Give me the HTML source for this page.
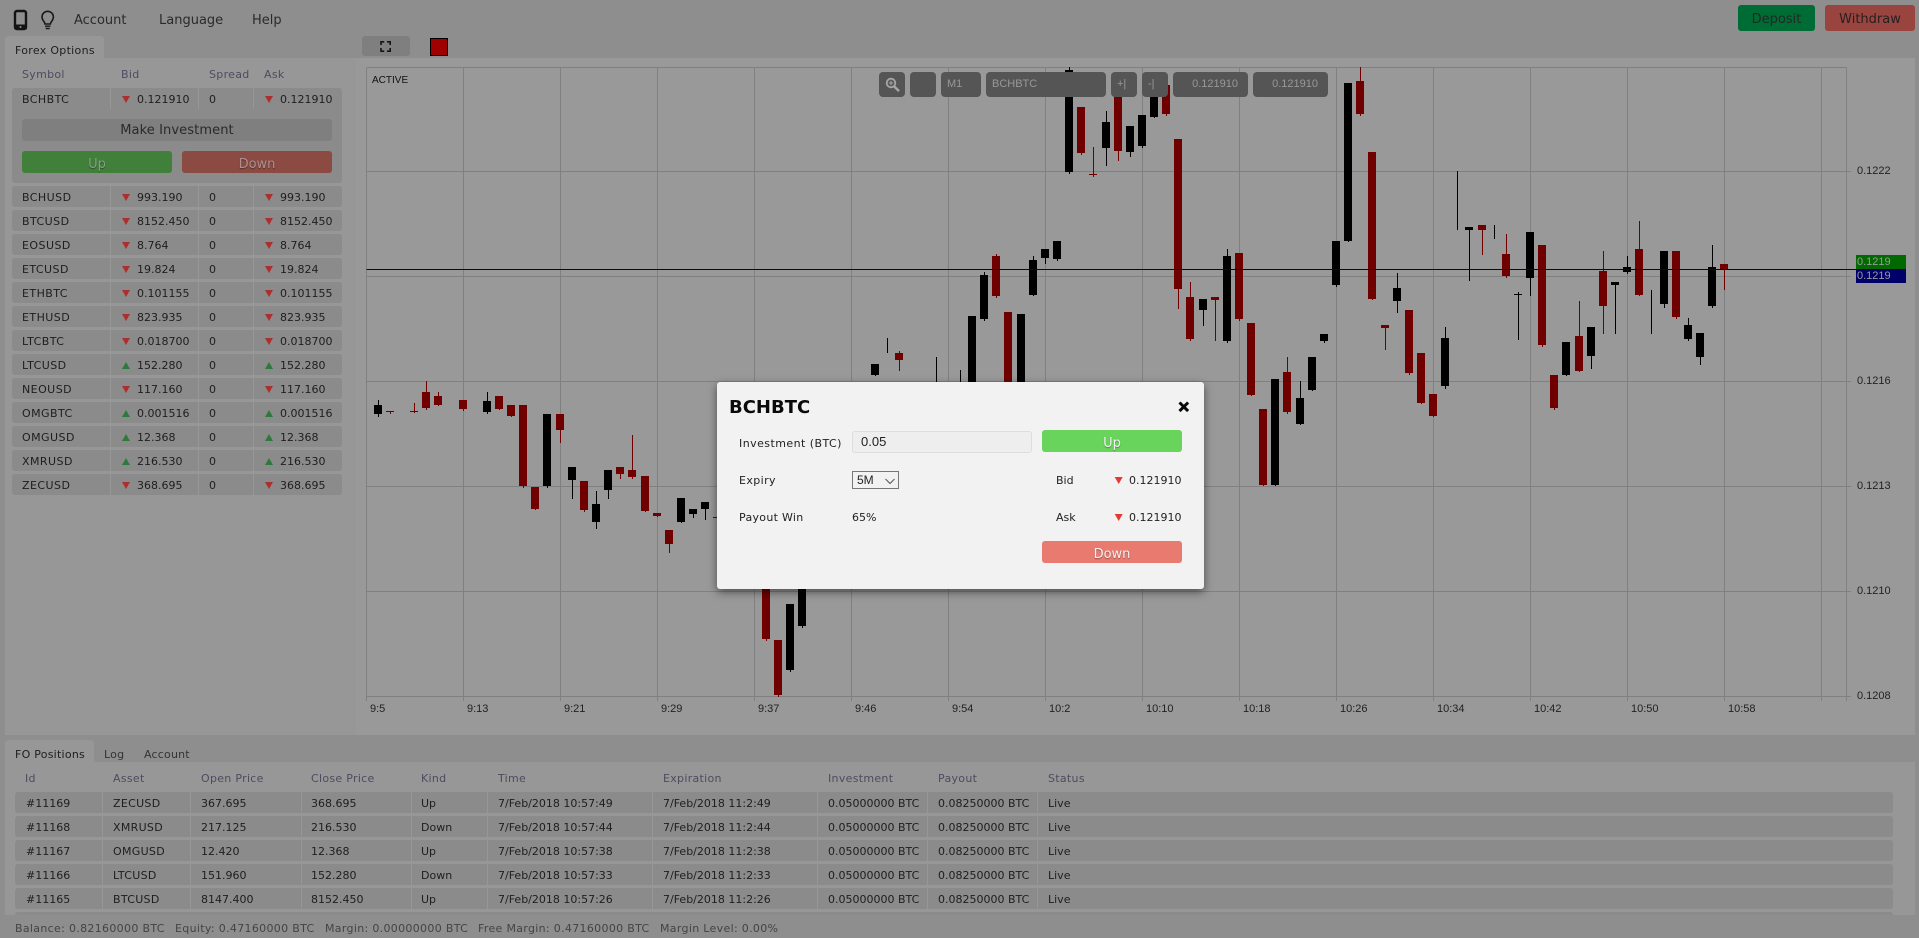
<!DOCTYPE html>
<html><head><meta charset="utf-8"><title>Forex Options</title>
<style>
html,body{margin:0;padding:0;width:1919px;height:938px;overflow:hidden;background:#8e8e8e}
body{position:relative;font-family:"DejaVu Sans","Liberation Sans",sans-serif;font-size:11px;color:#1e1e1e}
div,span,i{position:absolute;white-space:nowrap}
span{line-height:14px}
svg{position:absolute;left:0;top:0}
.m{font-size:13px;top:14px;color:#2a2a2a}
.tab{background:#979797;border-radius:3px 3px 0 0}
.h{color:#4c4c60;letter-spacing:.3px}
.r{left:12px;width:330px;height:21px;background:#8b8b8b;border-radius:3px}
.r b{position:absolute;top:0;bottom:0;width:1px;background:#979797}
.r span{top:5px}
.s1{left:10px;letter-spacing:.45px}.s2{left:125px}.s3{left:185px}.s4{left:268px}
.dn,.up{width:0;height:0;border-left:4px solid transparent;border-right:4px solid transparent;top:8px}
.dn{border-top:7px solid #ab2f2f}.up{border-bottom:7px solid #2f7a3a}
.t1{left:110px}.t2{left:253px}
.q{left:15px;width:1878px;height:21px;background:#8b8b8b;border-radius:3px}
.q b{position:absolute;top:0;bottom:0;width:1px;background:#979797}
.q span{top:5px}
.q span:nth-of-type(2){letter-spacing:.3px}
.btn{border-radius:3px;text-align:center;line-height:27px;font-size:13px}
.tb{top:72px;height:25px;background:#555;border-radius:4px;color:#989898;font:11px/25px "Liberation Sans",sans-serif}
.tb span{line-height:25px}
.cl,.pl{font:11px/14px "Liberation Sans",sans-serif;color:#222}
.cl{top:702px}
.pl{left:1857px}
.st{top:922px;color:#444;letter-spacing:.32px}
#modal span{color:#222}
</style></head><body>

<!-- top bar -->
<svg width="60" height="36" viewBox="0 0 60 36" style="z-index:1">
<rect x="15" y="11" width="11" height="18" rx="2" fill="none" stroke="#141414" stroke-width="2.4"/>
<rect x="14" y="24.5" width="13" height="5" rx="1.5" fill="#141414"/>
<circle cx="20.5" cy="27" r="1" fill="#8e8e8e"/>
<path d="M45 24c0-2.2-3-3.4-3-7a5.7 5.7 0 0 1 11.4 0c0 3.600-3 4.800-3 7z" fill="none" stroke="#1a1a1a" stroke-width="1.600"/>
<path d="M45 26.200h5.500M45.700 28.500h4" stroke="#1a1a1a" stroke-width="1.400" fill="none"/>
</svg>
<span class="m" style="left:74px">Account</span>
<span class="m" style="left:159px">Language</span>
<span class="m" style="left:252px">Help</span>
<div class="btn" style="left:1738px;top:5px;width:77px;height:26px;background:#006c35;color:#1e2a22;line-height:30px">Deposit</div>
<div class="btn" style="left:1825px;top:5px;width:90px;height:26px;background:#9a4440;color:#262020;line-height:30px">Withdraw</div>

<!-- left panel -->
<div class="tab" style="left:5px;top:36px;width:99px;height:22px"></div>
<span style="left:15px;top:44px;color:#1e1e1e;letter-spacing:.3px">Forex Options</span>
<div style="left:5px;top:58px;width:351px;height:677px;background:#979797"></div>
<div style="left:356px;top:58px;width:1559px;height:677px;background:#999"></div>

<span class="h" style="left:22px;top:68px">Symbol</span>
<span class="h" style="left:121px;top:68px">Bid</span>
<span class="h" style="left:209px;top:68px">Spread</span>
<span class="h" style="left:264px;top:68px">Ask</span>

<div class="r" style="top:88px;height:95px"><b style="left:98px;bottom:74px"></b><b style="left:186px;bottom:74px"></b><b style="left:241px;bottom:74px"></b>
<span class="s1">BCHBTC</span><i class="dn t1"></i><span class="s2">0.121910</span><span class="s3" style="left:197px">0</span><i class="dn t2"></i><span class="s4">0.121910</span></div>
<div class="btn" style="left:22px;top:119px;width:310px;height:22px;background:#7f7f7f;color:#2a2a2a;letter-spacing:.1px;line-height:24px">Make Investment</div>
<div class="btn" style="left:22px;top:151px;width:150px;height:22px;background:#40803a;color:#8a9c88;text-shadow:0 1px 1px rgba(0,0,0,.4)">Up</div>
<div class="btn" style="left:182px;top:151px;width:150px;height:22px;background:#8b4a42;color:#ab9290;text-shadow:0 1px 1px rgba(0,0,0,.4)">Down</div>

<div class="r" style="top:186px"><b style="left:98px"></b><b style="left:186px"></b><b style="left:241px"></b><span class="s1">BCHUSD</span><i class="dn t1"></i><span class="s2">993.190</span><span style="left:197px">0</span><i class="dn t2"></i><span class="s4">993.190</span></div>
<div class="r" style="top:210px"><b style="left:98px"></b><b style="left:186px"></b><b style="left:241px"></b><span class="s1">BTCUSD</span><i class="dn t1"></i><span class="s2">8152.450</span><span style="left:197px">0</span><i class="dn t2"></i><span class="s4">8152.450</span></div>
<div class="r" style="top:234px"><b style="left:98px"></b><b style="left:186px"></b><b style="left:241px"></b><span class="s1">EOSUSD</span><i class="dn t1"></i><span class="s2">8.764</span><span style="left:197px">0</span><i class="dn t2"></i><span class="s4">8.764</span></div>
<div class="r" style="top:258px"><b style="left:98px"></b><b style="left:186px"></b><b style="left:241px"></b><span class="s1">ETCUSD</span><i class="dn t1"></i><span class="s2">19.824</span><span style="left:197px">0</span><i class="dn t2"></i><span class="s4">19.824</span></div>
<div class="r" style="top:282px"><b style="left:98px"></b><b style="left:186px"></b><b style="left:241px"></b><span class="s1">ETHBTC</span><i class="dn t1"></i><span class="s2">0.101155</span><span style="left:197px">0</span><i class="dn t2"></i><span class="s4">0.101155</span></div>
<div class="r" style="top:306px"><b style="left:98px"></b><b style="left:186px"></b><b style="left:241px"></b><span class="s1">ETHUSD</span><i class="dn t1"></i><span class="s2">823.935</span><span style="left:197px">0</span><i class="dn t2"></i><span class="s4">823.935</span></div>
<div class="r" style="top:330px"><b style="left:98px"></b><b style="left:186px"></b><b style="left:241px"></b><span class="s1">LTCBTC</span><i class="dn t1"></i><span class="s2">0.018700</span><span style="left:197px">0</span><i class="dn t2"></i><span class="s4">0.018700</span></div>
<div class="r" style="top:354px"><b style="left:98px"></b><b style="left:186px"></b><b style="left:241px"></b><span class="s1">LTCUSD</span><i class="up t1"></i><span class="s2">152.280</span><span style="left:197px">0</span><i class="up t2"></i><span class="s4">152.280</span></div>
<div class="r" style="top:378px"><b style="left:98px"></b><b style="left:186px"></b><b style="left:241px"></b><span class="s1">NEOUSD</span><i class="dn t1"></i><span class="s2">117.160</span><span style="left:197px">0</span><i class="dn t2"></i><span class="s4">117.160</span></div>
<div class="r" style="top:402px"><b style="left:98px"></b><b style="left:186px"></b><b style="left:241px"></b><span class="s1">OMGBTC</span><i class="up t1"></i><span class="s2">0.001516</span><span style="left:197px">0</span><i class="up t2"></i><span class="s4">0.001516</span></div>
<div class="r" style="top:426px"><b style="left:98px"></b><b style="left:186px"></b><b style="left:241px"></b><span class="s1">OMGUSD</span><i class="up t1"></i><span class="s2">12.368</span><span style="left:197px">0</span><i class="up t2"></i><span class="s4">12.368</span></div>
<div class="r" style="top:450px"><b style="left:98px"></b><b style="left:186px"></b><b style="left:241px"></b><span class="s1">XMRUSD</span><i class="up t1"></i><span class="s2">216.530</span><span style="left:197px">0</span><i class="up t2"></i><span class="s4">216.530</span></div>
<div class="r" style="top:474px"><b style="left:98px"></b><b style="left:186px"></b><b style="left:241px"></b><span class="s1">ZECUSD</span><i class="dn t1"></i><span class="s2">368.695</span><span style="left:197px">0</span><i class="dn t2"></i><span class="s4">368.695</span></div>

<!-- chart strip -->
<div class="btn" style="left:362px;top:36px;width:48px;height:20px;background:#7f7f7f"></div>
<div style="left:430px;top:38px;width:16px;height:16px;background:#a00000;border:1px solid #000"></div>

<!-- chart -->
<svg width="1919" height="938" viewBox="0 0 1919 938">
<path fill="none" stroke="#808080" stroke-width="1" d="M366.500 67.500H1846.500M366.500 171.500H1851M366.500 276.500H1851M366.500 381.500H1851M366.500 486.500H1851M366.500 591.500H1851M366.500 696.500H1851M366.500 67.500V701M463.500 67.500V701M560.500 67.500V701M657.500 67.500V701M754.500 67.500V701M851.500 67.500V701M948.500 67.500V701M1045.500 67.500V701M1142.500 67.500V701M1239.500 67.500V701M1336.500 67.500V701M1433.500 67.500V701M1530.500 67.500V701M1627.500 67.500V701M1724.500 67.500V701M1821.500 67.500V701M1846.500 67.500V701"/>
<path fill="#000" d="M374 405h8V414h-8zM483 401h8V412h-8zM543 414h8V486h-8zM568 467h8V480h-8zM592 504h8V522h-8zM604 470h8V490h-8zM677 498h8V522h-8zM689 509h8V514h-8zM701 502h8V509h-8zM786 604h8V670h-8zM798 585h8V626h-8zM871 364h8V375h-8zM968 316h8V385h-8zM980 275h8V319h-8zM1017 314h8V385h-8zM1029 260h8V295h-8zM1041 249h8V258h-8zM1053 241h8V259h-8zM1065 70h8V172h-8zM1102 122h8V148h-8zM1126 126h8V152h-8zM1138 115h8V146h-8zM1150 90h8V117h-8zM1199 299h8V310h-8zM1223 256h8V341h-8zM1271 379h8V485h-8zM1296 398h8V424h-8zM1308 357h8V390h-8zM1320 334h8V341h-8zM1332 241h8V285h-8zM1344 83h8V241h-8zM1393 288h8V301h-8zM1441 338h8V386h-8zM1465 227h8V230h-8zM1514 294h8V295h-8zM1526 232h8V278h-8zM1562 342h8V375h-8zM1587 327h8V356h-8zM1611 282h8V285h-8zM1623 267h8V272h-8zM1660 251h8V304h-8zM1684 325h8V339h-8zM1696 333h8V357h-8zM1708 267h8V306h-8z"/>
<path fill="none" stroke="#000" stroke-width="1" d="M378.500 400V417M487.500 392V414M547.500 486V488M572.500 480V499M596.500 491V529M608.500 490V499M681.500 522V523M693.500 514V518M705.500 509V520M790.500 670V672M802.500 626V628M875.500 375V376M887.500 338V353M936.500 357V385M960.500 370V385M984.500 272V321M1033.500 256V296M1045.500 258V264M1057.500 259V261M1069.500 67V174M1106.500 111V166M1130.500 152V157M1142.500 146V148M1154.500 117V118M1203.500 310V326M1227.500 249V343M1275.500 485V486M1300.500 381V425M1312.500 390V391M1324.500 341V343M1336.500 285V287M1348.500 241V242M1397.500 273V313M1445.500 327V389M1457.500 171V230M1469.500 230V281M1494.500 225V239M1518.500 292V340M1530.500 278V296M1566.500 375V376M1591.500 356V369M1615.500 285V334M1627.500 256V274M1651.500 290V334M1664.500 304V308M1688.500 318V341M1700.500 357V365M1712.500 245V308"/>
<path fill="#700000" d="M386 411h8V412h-8zM410 411h8V412h-8zM422 392h8V408h-8zM434 396h8V405h-8zM459 400h8V409h-8zM495 396h8V409h-8zM507 405h8V416h-8zM519 405h8V486h-8zM531 487h8V509h-8zM556 414h8V430h-8zM580 481h8V510h-8zM616 467h8V474h-8zM628 470h8V477h-8zM641 476h8V511h-8zM653 513h8V516h-8zM665 530h8V544h-8zM713 517h8V518h-8zM762 585h8V639h-8zM774 640h8V695h-8zM895 353h8V360h-8zM992 256h8V296h-8zM1004 312h8V385h-8zM1077 107h8V153h-8zM1089 174h8V175h-8zM1114 90h8V151h-8zM1162 85h8V114h-8zM1174 139h8V289h-8zM1186 297h8V339h-8zM1211 297h8V300h-8zM1235 253h8V319h-8zM1247 323h8V395h-8zM1259 409h8V485h-8zM1283 372h8V412h-8zM1356 81h8V114h-8zM1368 152h8V299h-8zM1381 325h8V328h-8zM1405 310h8V373h-8zM1417 353h8V403h-8zM1429 394h8V416h-8zM1478 225h8V230h-8zM1502 254h8V276h-8zM1538 245h8V345h-8zM1550 375h8V408h-8zM1575 336h8V371h-8zM1599 271h8V306h-8zM1635 249h8V295h-8zM1672 251h8V317h-8zM1720 264h8V269h-8z"/>
<path fill="none" stroke="#700000" stroke-width="1" d="M390.500 412V414M414.500 403V413M426.500 381V410M438.500 392V406M463.500 400V411M499.500 409V410M511.500 416V417M523.500 486V488M535.500 509V510M560.500 430V443M584.500 510V512M620.500 474V479M632.500 435V479M645.500 511V512M657.500 516V517M669.500 544V553M766.500 639V641M778.500 695V697M899.500 351V371M996.500 254V298M1081.500 153V155M1093.500 147V177M1118.500 151V161M1166.500 114V116M1178.500 289V309M1190.500 282V341M1215.500 300V341M1239.500 319V321M1251.500 395V396M1263.500 485V486M1287.500 357V414M1360.500 67V116M1372.500 299V300M1385.500 328V350M1409.500 373V375M1421.500 403V404M1433.500 416V417M1482.500 230V255M1506.500 234V278M1542.500 345V347M1554.500 408V410M1579.500 301V372M1603.500 251V334M1639.500 221V296M1676.500 317V319M1724.500 269V290"/>
<path fill="none" stroke="#00006b" stroke-width="1" d="M366.500 269.500H1856"/>
<path fill="none" stroke="#141414" stroke-width="1.600" d="M381 45v-3.200h3.200M387 41.800h3.200V45M381 48v3.200h3.200M387 51.200h3.200V48"/>
</svg>
<span class="cl" style="left:372px;top:74px;font-size:10px;color:#111">ACTIVE</span>
<span class="cl" style="left:370px">9:5</span>
<span class="cl" style="left:467px">9:13</span>
<span class="cl" style="left:564px">9:21</span>
<span class="cl" style="left:661px">9:29</span>
<span class="cl" style="left:758px">9:37</span>
<span class="cl" style="left:855px">9:46</span>
<span class="cl" style="left:952px">9:54</span>
<span class="cl" style="left:1049px">10:2</span>
<span class="cl" style="left:1146px">10:10</span>
<span class="cl" style="left:1243px">10:18</span>
<span class="cl" style="left:1340px">10:26</span>
<span class="cl" style="left:1437px">10:34</span>
<span class="cl" style="left:1534px">10:42</span>
<span class="cl" style="left:1631px">10:50</span>
<span class="cl" style="left:1728px">10:58</span>
<span class="pl" style="top:164px">0.1222</span>
<span class="pl" style="top:374px">0.1216</span>
<span class="pl" style="top:479px">0.1213</span>
<span class="pl" style="top:584px">0.1210</span>
<span class="pl" style="top:689px">0.1208</span>
<div style="left:1856px;top:255px;width:50px;height:14px;background:#006a00"></div>
<div style="left:1856px;top:269px;width:50px;height:14px;background:#00006b"></div>
<span class="pl" style="top:255px;color:#9a9a9a">0.1219</span>
<span class="pl" style="top:269px;color:#9a9a9a">0.1219</span>

<!-- chart toolbar -->
<div class="tb" style="left:879px;width:26px"><svg width="26" height="25" viewBox="0 0 26 25"><circle cx="12" cy="11" r="4.300" fill="none" stroke="#a6a6a6" stroke-width="1.800"/><path d="M15 14.300l5 4.800" stroke="#a6a6a6" stroke-width="2.400"/><path d="M9.800 11h4.400M12 8.800v4.400" stroke="#a6a6a6" stroke-width="1"/></svg></div>
<div class="tb" style="left:910px;width:26px"></div>
<div class="tb" style="left:941px;width:40px"><span style="left:6px">M1</span></div>
<div class="tb" style="left:986px;width:120px"><span style="left:6px">BCHBTC</span></div>
<div class="tb" style="left:1111px;width:26px"><span style="left:6px">+|</span></div>
<div class="tb" style="left:1142px;width:26px"><span style="left:6px">-|</span></div>
<div class="tb" style="left:1173px;width:75px"><span style="right:10px">0.121910</span></div>
<div class="tb" style="left:1253px;width:75px"><span style="right:10px">0.121910</span></div>

<!-- bottom panel -->
<div class="tab" style="left:5px;top:740px;width:89px;height:22px"></div>
<span style="left:15px;top:748px;letter-spacing:.25px">FO Positions</span>
<span style="left:104px;top:748px;color:#333;letter-spacing:.2px">Log</span>
<span style="left:144px;top:748px;color:#333;letter-spacing:.2px">Account</span>
<div style="left:5px;top:762px;width:1910px;height:153px;background:#979797"></div>
<span class="h" style="left:25px;top:772px">Id</span>
<span class="h" style="left:113px;top:772px">Asset</span>
<span class="h" style="left:201px;top:772px">Open Price</span>
<span class="h" style="left:311px;top:772px">Close Price</span>
<span class="h" style="left:421px;top:772px">Kind</span>
<span class="h" style="left:498px;top:772px">Time</span>
<span class="h" style="left:663px;top:772px">Expiration</span>
<span class="h" style="left:828px;top:772px">Investment</span>
<span class="h" style="left:938px;top:772px">Payout</span>
<span class="h" style="left:1048px;top:772px">Status</span>

<div class="q" style="top:792px"><b style="left:87px"></b><b style="left:175px"></b><b style="left:286px"></b><b style="left:396px"></b><b style="left:472px"></b><b style="left:637px"></b><b style="left:802px"></b><b style="left:912px"></b><b style="left:1022px"></b>
<span style="left:11px">#11169</span><span style="left:98px">ZECUSD</span><span style="left:186px">367.695</span><span style="left:296px">368.695</span><span style="left:406px">Up</span><span style="left:483px">7/Feb/2018 10:57:49</span><span style="left:648px">7/Feb/2018 11:2:49</span><span style="left:813px">0.05000000 BTC</span><span style="left:923px">0.08250000 BTC</span><span style="left:1033px">Live</span></div>
<div class="q" style="top:816px"><b style="left:87px"></b><b style="left:175px"></b><b style="left:286px"></b><b style="left:396px"></b><b style="left:472px"></b><b style="left:637px"></b><b style="left:802px"></b><b style="left:912px"></b><b style="left:1022px"></b>
<span style="left:11px">#11168</span><span style="left:98px">XMRUSD</span><span style="left:186px">217.125</span><span style="left:296px">216.530</span><span style="left:406px">Down</span><span style="left:483px">7/Feb/2018 10:57:44</span><span style="left:648px">7/Feb/2018 11:2:44</span><span style="left:813px">0.05000000 BTC</span><span style="left:923px">0.08250000 BTC</span><span style="left:1033px">Live</span></div>
<div class="q" style="top:840px"><b style="left:87px"></b><b style="left:175px"></b><b style="left:286px"></b><b style="left:396px"></b><b style="left:472px"></b><b style="left:637px"></b><b style="left:802px"></b><b style="left:912px"></b><b style="left:1022px"></b>
<span style="left:11px">#11167</span><span style="left:98px">OMGUSD</span><span style="left:186px">12.420</span><span style="left:296px">12.368</span><span style="left:406px">Up</span><span style="left:483px">7/Feb/2018 10:57:38</span><span style="left:648px">7/Feb/2018 11:2:38</span><span style="left:813px">0.05000000 BTC</span><span style="left:923px">0.08250000 BTC</span><span style="left:1033px">Live</span></div>
<div class="q" style="top:864px"><b style="left:87px"></b><b style="left:175px"></b><b style="left:286px"></b><b style="left:396px"></b><b style="left:472px"></b><b style="left:637px"></b><b style="left:802px"></b><b style="left:912px"></b><b style="left:1022px"></b>
<span style="left:11px">#11166</span><span style="left:98px">LTCUSD</span><span style="left:186px">151.960</span><span style="left:296px">152.280</span><span style="left:406px">Down</span><span style="left:483px">7/Feb/2018 10:57:33</span><span style="left:648px">7/Feb/2018 11:2:33</span><span style="left:813px">0.05000000 BTC</span><span style="left:923px">0.08250000 BTC</span><span style="left:1033px">Live</span></div>
<div class="q" style="top:888px"><b style="left:87px"></b><b style="left:175px"></b><b style="left:286px"></b><b style="left:396px"></b><b style="left:472px"></b><b style="left:637px"></b><b style="left:802px"></b><b style="left:912px"></b><b style="left:1022px"></b>
<span style="left:11px">#11165</span><span style="left:98px">BTCUSD</span><span style="left:186px">8147.400</span><span style="left:296px">8152.450</span><span style="left:406px">Up</span><span style="left:483px">7/Feb/2018 10:57:26</span><span style="left:648px">7/Feb/2018 11:2:26</span><span style="left:813px">0.05000000 BTC</span><span style="left:923px">0.08250000 BTC</span><span style="left:1033px">Live</span></div>
<div class="q" style="top:912px;height:3px;border-radius:3px 3px 0 0"></div>
<span class="st" style="left:15px">Balance: 0.82160000 BTC</span>
<span class="st" style="left:175px">Equity: 0.47160000 BTC</span>
<span class="st" style="left:325px">Margin: 0.00000000 BTC</span>
<span class="st" style="left:478px">Free Margin: 0.47160000 BTC</span>
<span class="st" style="left:660px">Margin Level: 0.00%</span>

<!-- modal -->
<div id="modal" style="left:717px;top:382px;width:487px;height:207px;background:#f2f2f2;border-radius:3px;box-shadow:0 3px 9px rgba(0,0,0,.5)">
<span style="left:12px;top:15px;font-size:18px;line-height:22px;font-weight:bold;color:#0a0a0a">BCHBTC</span>
<svg width="487" height="207" viewBox="0 0 487 207"><path d="M462.500 20.500l8.600 8.600M471.100 20.500l-8.600 8.600" stroke="#0a0a0a" stroke-width="3" fill="none"/>
<path d="M397.700 95h8l-4 7zM397.700 132h8l-4 7z" fill="#e53935"/>
<path d="M168.500 97l4.500 4.500 4.500-4.500" fill="none" stroke="#555" stroke-width="1"/></svg>
<span style="left:22px;top:55px;letter-spacing:.45px">Investment (BTC)</span>
<div style="left:135px;top:49px;width:178px;height:20px;background:#eee;border:1px solid #ddd;border-radius:3px"></div>
<span style="left:144px;top:52px;font:13px/16px 'Liberation Sans',sans-serif">0.05</span>
<div class="btn" style="left:325px;top:48px;width:140px;height:22px;background:#68d45c;color:#f2f2f2;text-shadow:0 1px 1px rgba(0,0,0,.35)">Up</div>
<span style="left:22px;top:92px;letter-spacing:.4px">Expiry</span>
<div style="left:135px;top:89px;width:45px;height:16px;border:1px solid #777"></div>
<span style="left:140px;top:91px;font:12px/14px 'Liberation Sans',sans-serif;color:#222">5M</span>
<span style="left:339px;top:92px">Bid</span>
<span style="left:412px;top:92px">0.121910</span>
<span style="left:22px;top:129px;letter-spacing:.3px">Payout Win</span>
<span style="left:135px;top:129px">65%</span>
<span style="left:339px;top:129px">Ask</span>
<span style="left:412px;top:129px">0.121910</span>
<div class="btn" style="left:325px;top:159px;width:140px;height:22px;background:#e87a70;color:#f2f2f2;text-shadow:0 1px 1px rgba(0,0,0,.35)">Down</div>
</div>
</body></html>
